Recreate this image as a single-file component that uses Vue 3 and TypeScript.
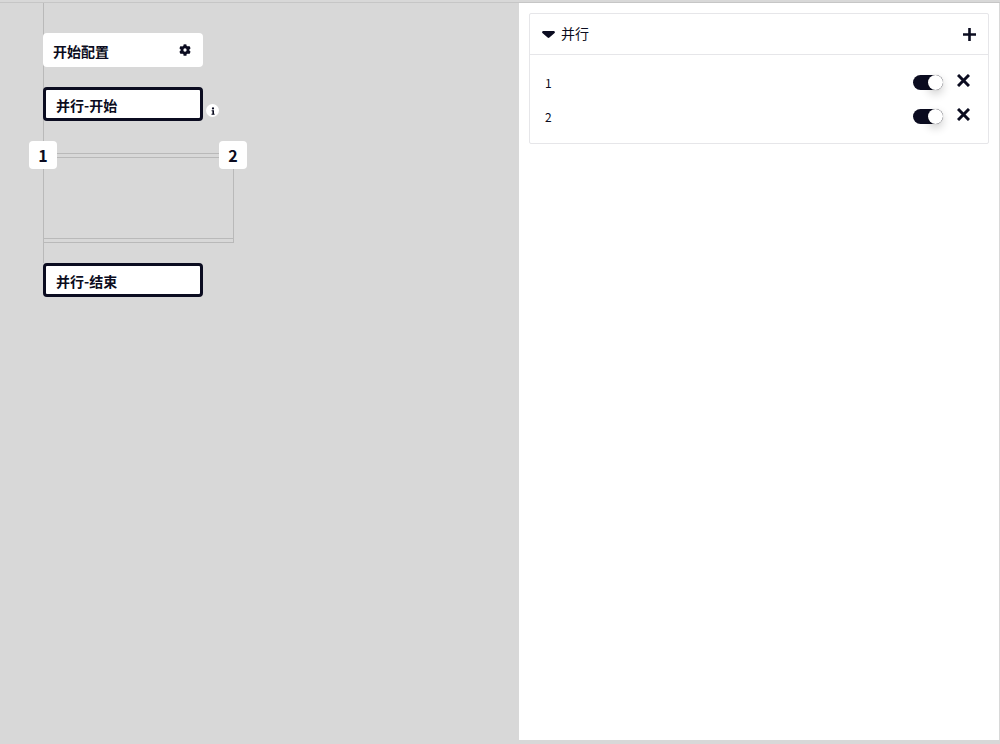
<script setup lang="ts">
const rows: string[] = ['1', '2']
</script>

<template>
  <div class="page">
    <section class="canvas">
      <span class="spine"></span>
      <div class="node plain">
        <span>开始配置</span>
        <svg class="gear" viewBox="0 0 512 512" width="12" height="12"><path fill="#0b0c20" fill-rule="evenodd" d="M487 316l-42-25a192 192 0 0 0 0-70l42-25c5-3 7-9 5-14-11-35-30-67-54-93-4-4-10-5-15-2l-42 24a188 188 0 0 0-61-35V28c0-6-4-11-9-12a220 220 0 0 0-110 0c-5 1-9 6-9 12v49c-22 8-43 20-61 35L89 88c-5-3-11-2-15 2-24 26-43 58-54 93-2 5 0 11 5 14l42 25a192 192 0 0 0 0 70l-42 25c-5 3-7 9-5 14 11 35 30 67 54 93 4 4 10 5 15 2l42-24c18 15 39 27 61 35v49c0 6 4 11 9 12 37 8 74 8 110 0 5-1 9-6 9-12v-49c22-8 43-20 61-35l42 24c5 3 11 2 15-2 24-26 43-58 54-93 2-5 0-11-5-14zM256 326a70 70 0 1 1 0-140 70 70 0 0 1 0 140z"/></svg>
      </div>
      <div class="node outlined">
        <span>并行-开始</span>
        <span class="info">
          <svg viewBox="0 0 10 10" width="10" height="10"><circle cx="5" cy="2.4" r="1.1" fill="#0b0c20"/><path fill="#0b0c20" d="M3.6 4.2H6v3.5h.6v1.1H3.5V7.7h.9V5.3h-.8z"/></svg>
        </span>
      </div>
      <div class="branch">
        <span class="line top-a"></span>
        <span class="line top-b"></span>
        <span class="line bottom-a"></span>
        <span class="line bottom-b"></span>
        <span class="line right-edge"></span>
        <span class="badge badge-left">1</span>
        <span class="badge badge-right">2</span>
      </div>
      <div class="node outlined">
        <span>并行-结束</span>
      </div>
    </section>

    <aside class="panel">
      <div class="card">
        <header class="card-head">
          <div class="title">
            <svg class="caret" viewBox="0 0 13 7" width="13" height="7"><path fill="#0b0c20" d="M1.4 0h10.2c1.1 0 1.7 1.2 1 2L7.4 6.6c-.5.5-1.3.5-1.8 0L.4 2C-.3 1.2.3 0 1.4 0z"/></svg>
            <span class="title-text">并行</span>
          </div>
          <svg class="plus" viewBox="0 0 13 13" width="13" height="13"><path stroke="#0b0c20" stroke-width="2.6" d="M6.5 0v13M0 6.5h13"/></svg>
        </header>
        <ul class="list">
          <li v-for="row in rows" :key="row" class="row">
            <span class="label">{{ row }}</span>
            <div class="controls">
              <span class="toggle"><span class="knob"></span></span>
              <svg class="close" viewBox="0 0 13 13" width="13" height="13"><path stroke="#0b0c20" stroke-width="3" d="M1 1l11 11M12 1L1 12"/></svg>
            </div>
          </li>
        </ul>
      </div>
    </aside>
  </div>
</template>

<style>
html, body { margin: 0; background: #d8d8d8; }
</style>

<style scoped>
.page {
  box-sizing: border-box;
  width: 1000px;
  height: 742px;
  margin-top: 2px;
  display: flex;
  justify-content: space-between;
  background: #d8d8d8;
  border-top: 1px solid #c6c6c6;
  font-family: "Noto Sans CJK SC", "Noto Sans", sans-serif;
  color: #0b0c20;
}
.canvas {
  position: relative;
  width: 519px;
  box-sizing: border-box;
  padding: 30px 0 0 43px;
  display: flex;
  flex-direction: column;
  align-items: flex-start;
}
.spine {
  position: absolute;
  left: 43px;
  top: 0;
  width: 1px;
  height: 260px;
  background: #b9b9b9;
}
.node {
  position: relative;
  box-sizing: border-box;
  width: 160px;
  height: 34px;
  padding-top: 2px;
  background: #fff;
  border-radius: 4px;
  font-size: 14px;
  font-weight: 700;
  line-height: 20px;
  display: flex;
  align-items: center;
}
.plain {
  padding-right: 12px;
  padding-left: 10px;
  justify-content: space-between;
  margin-bottom: 20px;
}
.gear { margin-top: -3px; }
.outlined {
  padding-right: 10px;
  padding-left: 10px;
  border: 3px solid #0b0c20;
}
.info {
  position: absolute;
  left: 160px;
  top: 14px;
  width: 13px;
  height: 13px;
  border-radius: 50%;
  background: #fff;
  display: flex;
  align-items: center;
  justify-content: center;
}
.branch {
  position: relative;
  width: 191px;
  height: 142px;
}
.line {
  position: absolute;
  background: #b9b9b9;
}
.top-a { left: 0; top: 32px; width: 190px; height: 1px; }
.top-b { left: 0; top: 36px; width: 190px; height: 1px; }
.bottom-a { left: 0; top: 117px; width: 190px; height: 1px; }
.bottom-b { left: 0; top: 121px; width: 191px; height: 1px; }
.right-edge { left: 190px; top: 36px; width: 1px; height: 86px; }
.badge {
  position: absolute;
  top: 20px;
  width: 28px;
  height: 28px;
  background: #fff;
  border-radius: 4px;
  font-size: 16px;
  font-weight: 700;
  line-height: 28px;
  text-align: center;
}
.badge-left { left: -14px; }
.badge-right { left: 176px; }
.panel {
  box-sizing: border-box;
  width: 480px;
  height: 737px;
  margin-right: 1px;
  padding: 10px;
  background: #fff;
}
.card {
  box-sizing: border-box;
  height: 131px;
  border: 1px solid #e6e6e9;
  border-radius: 2px;
}
.card-head {
  box-sizing: border-box;
  height: 41px;
  padding: 0 12px;
  display: flex;
  align-items: center;
  justify-content: space-between;
  border-bottom: 1px solid #e6e6e9;
}
.title {
  display: flex;
  align-items: center;
  gap: 6px;
  font-size: 14px;
}
.title-text { margin-top: -2px; }
.caret { margin-top: 1px; }
.list {
  list-style: none;
  margin: 0;
  padding: 10px 18px 0 15px;
}
.row {
  height: 34px;
  display: flex;
  align-items: center;
  justify-content: space-between;
  font-size: 12px;
}
.controls {
  display: flex;
  align-items: center;
  gap: 14px;
}
.toggle {
  position: relative;
  width: 30px;
  height: 15px;
  background: #0b0c20;
  border-radius: 8px;
}
.knob {
  position: absolute;
  right: 0;
  top: 0;
  width: 15px;
  height: 15px;
  background: #fff;
  border-radius: 50%;
  box-shadow: 0 4px 10px rgba(0, 0, 0, 0.2), 0 0 1px rgba(0, 0, 0, 0.4);
}
.close { margin-top: -3px; }
</style>
